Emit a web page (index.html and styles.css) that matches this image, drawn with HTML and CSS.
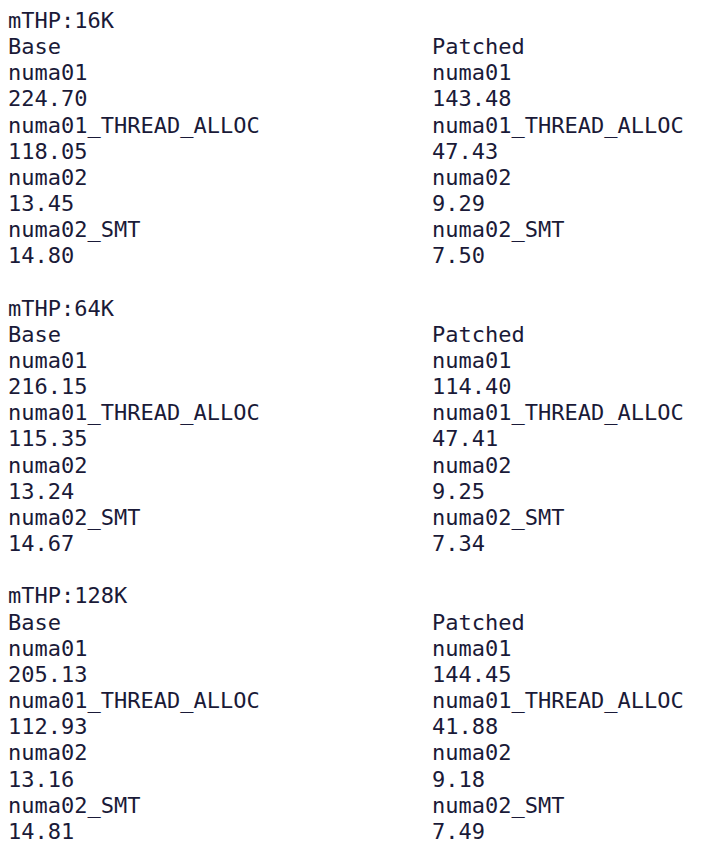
FILE: index.html
```html
<!DOCTYPE html>
<html>
<head>
<meta charset="utf-8">
<link rel="stylesheet" href="styles.css">
</head>
<body>
<div class="results">
  <section class="block">
    <div class="title">mTHP:16K</div>
    <div class="cols">
      <div class="col">
        <div>Base</div><div>numa01</div><div>224.70</div><div>numa01_THREAD_ALLOC</div><div>118.05</div><div>numa02</div><div>13.45</div><div>numa02_SMT</div><div>14.80</div>
      </div>
      <div class="col">
        <div>Patched</div><div>numa01</div><div>143.48</div><div>numa01_THREAD_ALLOC</div><div>47.43</div><div>numa02</div><div>9.29</div><div>numa02_SMT</div><div>7.50</div>
      </div>
    </div>
  </section>
  <section class="block">
    <div class="title">mTHP:64K</div>
    <div class="cols">
      <div class="col">
        <div>Base</div><div>numa01</div><div>216.15</div><div>numa01_THREAD_ALLOC</div><div>115.35</div><div>numa02</div><div>13.24</div><div>numa02_SMT</div><div>14.67</div>
      </div>
      <div class="col">
        <div>Patched</div><div>numa01</div><div>114.40</div><div>numa01_THREAD_ALLOC</div><div>47.41</div><div>numa02</div><div>9.25</div><div>numa02_SMT</div><div>7.34</div>
      </div>
    </div>
  </section>
  <section class="block">
    <div class="title">mTHP:128K</div>
    <div class="cols">
      <div class="col">
        <div>Base</div><div>numa01</div><div>205.13</div><div>numa01_THREAD_ALLOC</div><div>112.93</div><div>numa02</div><div>13.16</div><div>numa02_SMT</div><div>14.81</div>
      </div>
      <div class="col">
        <div>Patched</div><div>numa01</div><div>144.45</div><div>numa01_THREAD_ALLOC</div><div>41.88</div><div>numa02</div><div>9.18</div><div>numa02_SMT</div><div>7.49</div>
      </div>
    </div>
  </section>
</div>
</body>
</html>
```
FILE: styles.css
```css
html, body {
  background: #ffffff;
}
body {
  margin: 0;
  padding: 8px;
  font-family: "DejaVu Sans Mono", monospace;
  font-size: 22px;
  line-height: 26.15px;
  color: #1a1a38;
}
.block {
  margin-bottom: 26.15px;
}
.cols {
  display: grid;
  grid-template-columns: 424px auto;
}
.col div {
  white-space: pre;
}
```
